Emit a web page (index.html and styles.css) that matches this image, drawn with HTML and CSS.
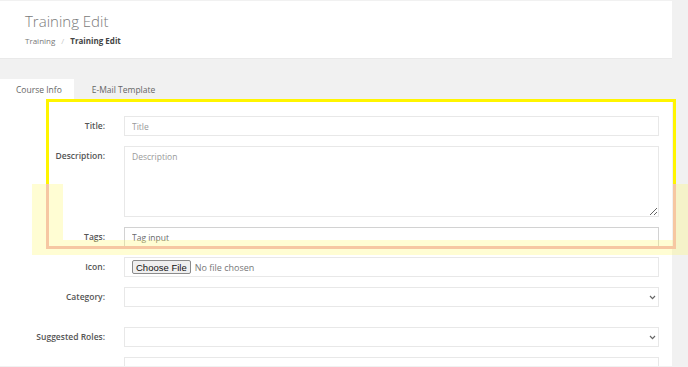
FILE: index.html
```html
<!DOCTYPE html>
<html>
<head>
<meta charset="utf-8">
<link rel="stylesheet" href="styles.css">
</head>
<body>
<div class="page">
  <header class="page-header">
    <h1 class="page-title">Training Edit</h1>
    <nav class="crumbs">
      <span class="crumb">Training</span>
      <span class="crumb-sep">/</span>
      <span class="crumb crumb-active">Training Edit</span>
    </nav>
  </header>

  <div class="tabs">
    <div class="tab tab-active">Course Info</div>
    <div class="tab">E-Mail Template</div>
  </div>

  <section class="panel">
    <form class="form">
      <label class="lbl">Title:</label>
      <input class="ctl" type="text" placeholder="Title">

      <label class="lbl">Description:</label>
      <textarea class="ctl ctl-area" placeholder="Description"></textarea>

      <label class="lbl">Tags:</label>
      <input class="ctl ctl-tags" type="text" placeholder="Tag input">

      <label class="lbl">Icon:</label>
      <div class="ctl ctl-file"><input class="file" type="file"></div>

      <label class="lbl lbl-gap">Category:</label>
      <div class="sel-wrap sel-gap">
        <select class="ctl ctl-sel"><option></option></select>
        <svg class="chev" width="7" height="5" viewBox="0 0 7 5"><path d="M1 1 L3.5 3.6 L6 1" fill="none" stroke="#666" stroke-width="1.2"/></svg>
      </div>

      <label class="lbl">Suggested Roles:</label>
      <div class="sel-wrap">
        <select class="ctl ctl-sel"><option></option></select>
        <svg class="chev" width="7" height="5" viewBox="0 0 7 5"><path d="M1 1 L3.5 3.6 L6 1" fill="none" stroke="#666" stroke-width="1.2"/></svg>
      </div>

      <label class="lbl"></label>
      <div class="ctl"></div>
    </form>
  </section>
</div>

<div class="hl-box"></div>
<div class="hl-band"></div>
<div class="hl-low"></div>
</body>
</html>
```

FILE: styles.css
```css
html, body {
  margin: 0;
  padding: 0;
  background: #f1f1f1;
  font-family: "Open Sans", "Liberation Sans", sans-serif;
  overflow: hidden;
  height: 367px;
}
body { position: relative; }

.page {
  padding: 1px 16px 0 0;
}

.page-header {
  background: #fff;
  height: 58px;
  box-sizing: border-box;
  padding: 10px 25px 0 25px;
  border-bottom: 1px solid #e9e9e9;
}
.page-title {
  margin: 0;
  font-size: 15px;
  line-height: 20px;
  font-weight: 300;
  color: #7a7a7a;
}
.crumbs {
  margin-top: 4px;
  font-size: 8px;
  line-height: 12px;
  color: #777;
  display: flex;
  gap: 6px;
}
.crumb-sep { color: #c8c8c8; }
.crumb-active { font-weight: 700; color: #444; }

.tabs {
  display: flex;
  margin-top: 20px;
  height: 21px;
}
.tab {
  padding: 0 15px 0 18px;
  font-size: 8.5px;
  line-height: 21px;
  color: #666;
}
.tab-active {
  background: #fff;
  padding: 0 12px 0 16px;
}

.panel {
  background: #fff;
  height: 266px;
  overflow: hidden;
}
.form {
  display: grid;
  grid-template-columns: 105px 1fr;
  column-gap: 19px;
  row-gap: 10px;
  padding: 16px 13px 0 0;
  margin: 0;
}
.lbl {
  text-align: right;
  font-size: 8.5px;
  line-height: 12px;
  padding-top: 4px;
  font-weight: 600;
  color: #555;
}
.lbl-gap { margin-bottom: 10px; }
.sel-gap { margin-bottom: 10px; }

.ctl {
  box-sizing: border-box;
  height: 20px;
  width: 100%;
  margin: 0;
  border: 1px solid #e8e8e8;
  background: #fff;
  font-family: "Open Sans", "Liberation Sans", sans-serif;
  font-size: 8.5px;
  color: #555;
  padding: 0 7px;
  outline: none;
  border-radius: 0;
}
.ctl::placeholder { color: #9a9a9a; }
.ctl-area {
  height: 71px;
  padding: 4px 7px;
  line-height: 12px;
  display: block;
}
.ctl-tags { border-color: #d2d2d2; }
.ctl-tags::placeholder { color: #6a6a6a; }

.ctl-file {
  display: flex;
  align-items: center;
  padding: 0 7px;
}
.file {
  font-family: "Open Sans", "Liberation Sans", sans-serif;
  font-size: 9px;
  color: #777;
}
.file::file-selector-button {
  font-family: "Liberation Sans", Arial, sans-serif;
  font-size: 9.5px;
  color: #111;
  background: #efefef;
  border: 1px solid #8a8a8a;
  border-radius: 2px;
  padding: 0 3px;
  height: 14px;
  margin-right: 4px;
}

.sel-wrap { position: relative; }
.ctl-sel {
  appearance: none;
  -webkit-appearance: none;
  display: block;
}
.chev {
  position: absolute;
  right: 3px;
  top: 8px;
}

.hl-box {
  position: absolute;
  left: 46px;
  top: 99px;
  width: 630px;
  height: 150px;
  box-sizing: border-box;
  border: 3px solid #fff500;
}
.hl-band {
  position: absolute;
  left: 32px;
  top: 184px;
  width: 656px;
  height: 71px;
  box-sizing: border-box;
  border-style: solid;
  border-color: rgba(255, 248, 110, 0.3);
  border-width: 0 12px 15px 31px;
}
.hl-low {
  position: absolute;
  left: 46px;
  top: 184px;
  width: 630px;
  height: 65px;
  box-sizing: border-box;
  border: 3px solid #f6c7a2;
  border-top: 0;
}
```
